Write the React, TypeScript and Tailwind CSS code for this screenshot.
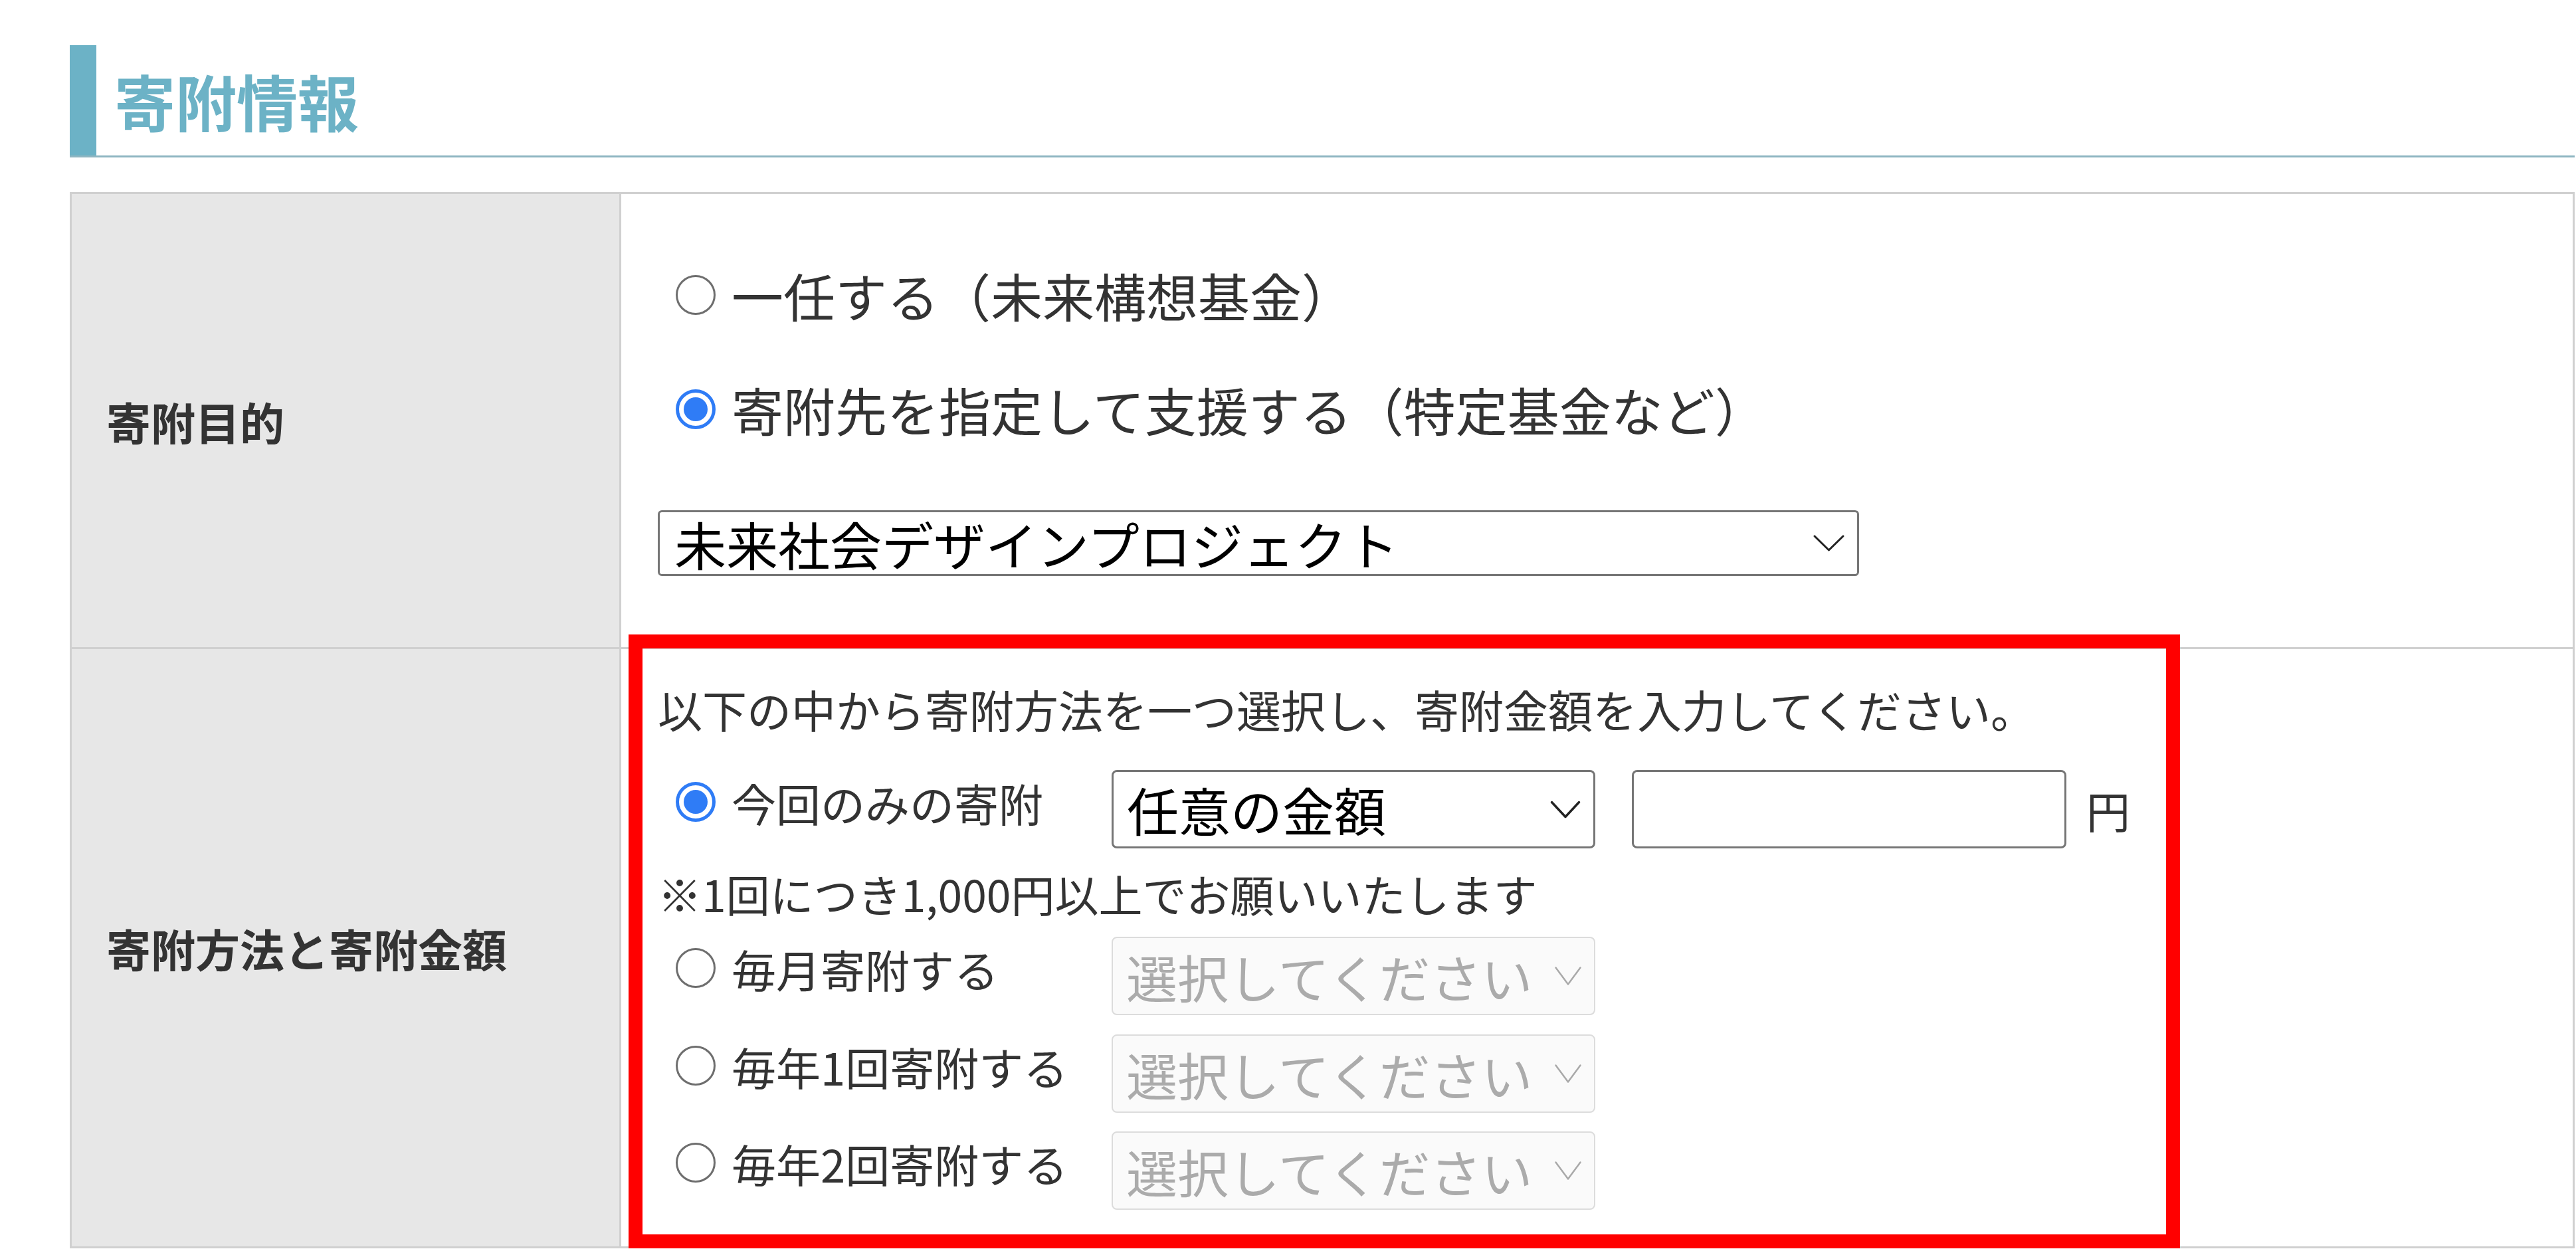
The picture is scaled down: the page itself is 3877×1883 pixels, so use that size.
import React from "react";

function Radio({ checked }: { checked?: boolean }) {
  if (checked) {
    return (
      <span className="flex h-[60px] w-[60px] shrink-0 items-center justify-center rounded-full border-[5px] border-[#2f7cf6] bg-white">
        <span className="h-[36px] w-[36px] rounded-full bg-[#2f7cf6]" />
      </span>
    );
  }
  return <span className="h-[60px] w-[60px] shrink-0 rounded-full border-[3px] border-[#6e6e6e] bg-white" />;
}

function Chevron({ w, h, color, stroke }: { w: number; h: number; color: string; stroke: number }) {
  return (
    <svg width={w} height={h} viewBox={`0 0 ${w} ${h}`} fill="none" className="shrink-0">
      <polyline
        points={`${stroke},${stroke} ${w / 2},${h - stroke} ${w - stroke},${stroke}`}
        stroke={color}
        strokeWidth={stroke}
        strokeLinecap="round"
        strokeLinejoin="round"
      />
    </svg>
  );
}

function DisabledSelect({ className = "" }: { className?: string }) {
  return (
    <div
      className={`flex h-[118px] w-[728px] items-center justify-between rounded-[8px] border-[2px] border-[#dcdcdc] bg-[#fafafa] pl-[20px] pr-[18px] text-[77px] leading-none text-[#ababab] ${className}`}
    >
      <span>選択してください</span>
      <Chevron w={42} h={30} color="#a9a9a9" stroke={2.5} />
    </div>
  );
}

const plans = [
  { label: "毎月寄附する", mt: "mt-[17px]" },
  { label: "毎年1回寄附する", mt: "mt-[29px]" },
  { label: "毎年2回寄附する", mt: "mt-[28px]" },
];

export default function App() {
  return (
    <div className="relative min-h-screen overflow-hidden bg-white font-['Noto_Sans_CJK_JP','Noto_Sans',sans-serif] text-[#333]">
      <div className="pl-[105px] pt-[68px]">
        <div className="w-[3770px]">
          {/* 見出し */}
          <h2 className="flex h-[169px] items-center border-b-[3px] border-[#8db5c1]">
            <span className="h-full w-[40px] bg-[#6cb2c6]" />
            <span className="pl-[27px] text-[92px] font-bold leading-none text-[#6cb2c6]">寄附情報</span>
          </h2>

          {/* フォーム表 */}
          <div className="mt-[52px] border-[3px] border-[#d0d0d0]">
            {/* 寄附目的 */}
            <div className="flex">
              <div className="flex w-[827px] shrink-0 items-center border-r-[3px] border-[#d0d0d0] bg-[#e7e7e7] pl-[52px] text-[67px] font-bold leading-none">
                寄附目的
              </div>
              <div className="flex-1 pb-[107px] pl-[55px] pt-[96px]">
                <div className="ml-[27px] flex h-[112px] items-center gap-[24px] text-[78px] leading-none">
                  <Radio />
                  <span>一任する（未来構想基金）</span>
                </div>
                <div className="ml-[27px] mt-[60px] flex h-[112px] items-center gap-[24px] text-[78px] leading-none">
                  <Radio checked />
                  <span>寄附先を指定して支援する（特定基金など）</span>
                </div>
                <div className="mt-[96px] flex h-[99px] w-[1808px] items-center justify-between rounded-[6px] border-[3px] border-[#767676] pl-[22px] pr-[18px] text-[78px] leading-none text-black">
                  <span>未来社会デザインプロジェクト</span>
                  <Chevron w={49} h={27} color="#222" stroke={3} />
                </div>
              </div>
            </div>

            {/* 寄附方法と寄附金額 */}
            <div className="flex border-t-[3px] border-[#d0d0d0]">
              <div className="flex w-[827px] shrink-0 items-center border-r-[3px] border-[#d0d0d0] bg-[#e7e7e7] pl-[52px] text-[67px] font-bold leading-none">
                寄附方法と寄附金額
              </div>
              <div className="flex-1 pb-[55px] pl-[55px] pt-[40px]">
                <div className="flex h-[99px] items-center text-[67px] leading-none">
                  以下の中から寄附方法を一つ選択し、寄附金額を入力してください。
                </div>

                <div className="mt-[43px] flex h-[118px] items-center">
                  <div className="ml-[27px] flex w-[656px] shrink-0 items-center gap-[24px] pb-[22px] text-[67px] leading-none">
                    <Radio checked />
                    <span>今回のみの寄附</span>
                  </div>
                  <div className="flex h-[118px] w-[728px] items-center justify-between rounded-[8px] border-[3px] border-[#767676] bg-white pl-[20px] pr-[18px] text-[78px] leading-none text-black">
                    <span>任意の金額</span>
                    <Chevron w={48} h={29} color="#222" stroke={3.5} />
                  </div>
                  <input
                    type="text"
                    className="ml-[55px] h-[118px] w-[654px] rounded-[8px] border-[3px] border-[#767676] bg-white px-[20px] text-[66px] outline-none"
                  />
                  <span className="ml-[30px] text-[66px] leading-none">円</span>
                </div>

                <div className="mt-[17px] flex h-[99px] items-center text-[66px] leading-none">
                  ※1回につき1,000円以上でお願いいたします
                </div>

                {plans.map((p) => (
                  <div key={p.label} className={`${p.mt} flex h-[118px] items-center`}>
                    <div className="ml-[27px] flex w-[656px] shrink-0 items-center gap-[24px] pb-[24px] text-[67px] leading-none">
                      <Radio />
                      <span>{p.label}</span>
                    </div>
                    <DisabledSelect />
                  </div>
                ))}
              </div>
            </div>
          </div>
        </div>
      </div>

      {/* 注釈の赤枠 */}
      <div className="pointer-events-none absolute left-[946px] top-[955px] h-[924px] w-[2335px] border-[21px] border-[#ff0000]" />
    </div>
  );
}
